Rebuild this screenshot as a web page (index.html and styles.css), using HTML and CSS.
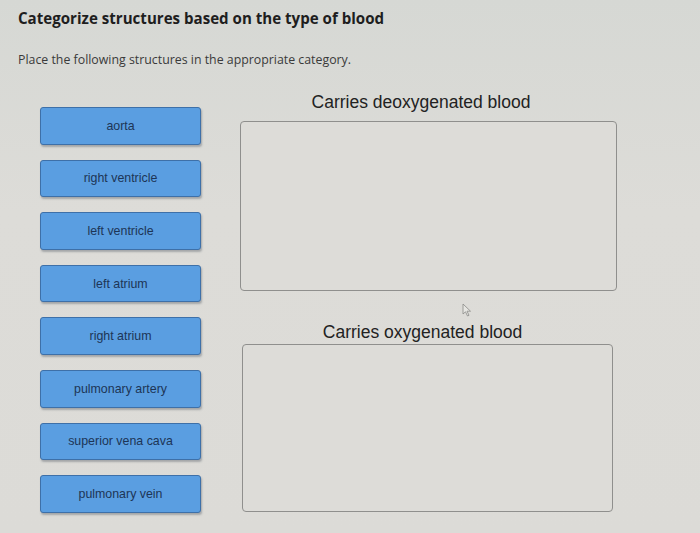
FILE: index.html
```html
<!DOCTYPE html>
<html>
<head>
<meta charset="utf-8">
<link rel="stylesheet" href="styles.css">
</head>
<body>
<div class="page">
  <h1 class="title">Categorize structures based on the type of blood</h1>
  <p class="intro">Place the following structures in the appropriate category.</p>
  <div class="workspace">
    <div class="items">
      <div class="item">aorta</div>
      <div class="item">right ventricle</div>
      <div class="item">left ventricle</div>
      <div class="item">left atrium</div>
      <div class="item">right atrium</div>
      <div class="item">pulmonary artery</div>
      <div class="item">superior vena cava</div>
      <div class="item">pulmonary vein</div>
    </div>
    <div class="bins">
      <div class="bin">
        <div class="bin-title">Carries deoxygenated blood</div>
        <div class="bin-box"></div>
      </div>
      <div class="bin bin-second">
        <div class="bin-title">Carries oxygenated blood</div>
        <div class="bin-box"></div>
        <svg class="cursor" width="10" height="14" viewBox="0 0 10 14"><path d="M1 1 L1 11 L3.5 8.8 L5.5 13 L7 12.3 L5 8.2 L8.5 8.2 Z" fill="#e6e6e2" stroke="#8a8a88" stroke-width="0.8"/></svg>
      </div>
    </div>
  </div>
</div>
</body>
</html>
```
FILE: styles.css
```css
html, body {
  margin: 0;
  padding: 0;
}
body {
  background: linear-gradient(180deg, #d6d8d4 0%, #dddcd8 40%, #dcdbd7 100%);
  width: 700px;
  height: 533px;
  overflow: hidden;
  font-family: "Liberation Sans", Arial, sans-serif;
}
.page {
  padding: 0 0 0 18px;
}
.title {
  margin: 0;
  padding-top: 8px;
  font-family: "Open Sans", "Lato", sans-serif;
  font-weight: 700;
  font-size: 15.1px;
  line-height: 20px;
  color: #1e1e1e;
}
.intro {
  margin: 24px 0 0 0;
  font-family: "Open Sans", "Lato", sans-serif;
  font-size: 12.35px;
  line-height: 16px;
  color: #3a3a3a;
}
.workspace {
  display: flex;
  padding-left: 22px;
  margin-top: 12px;
}
.items {
  display: flex;
  flex-direction: column;
  gap: 15px;
  padding-top: 27px;
  width: 161px;
}
.item {
  height: 37.6px;
  box-sizing: border-box;
  background: #5a9ee1;
  border: 1px solid #3e70a8;
  border-radius: 3px;
  box-shadow: 1px 2px 2px rgba(60, 70, 80, 0.35);
  display: flex;
  align-items: center;
  justify-content: center;
  font-size: 12.4px;
  color: #1d3556;
}
.bins {
  margin-left: 39px;
  width: 377px;
  display: flex;
  flex-direction: column;
}
.bin-title {
  text-align: center;
  font-size: 17.5px;
  line-height: 20px;
  color: #222;
  padding-top: 12px;
  padding-right: 15px;
  margin-bottom: 9px;
}
.bin-box {
  height: 170px;
  box-sizing: border-box;
  border: 1px solid #8f8f8d;
  border-radius: 4px;
  background: #dddcd8;
}
.bin-second {
  position: relative;
  margin-top: 31px;
  width: 371px;
  margin-left: 2px;
}
.bin-second .bin-title {
  padding-top: 0;
  padding-right: 10px;
  margin-bottom: 2px;
}
.bin-second .bin-box {
  height: 168px;
}
.cursor {
  position: absolute;
  left: 220px;
  top: -19px;
}
```
